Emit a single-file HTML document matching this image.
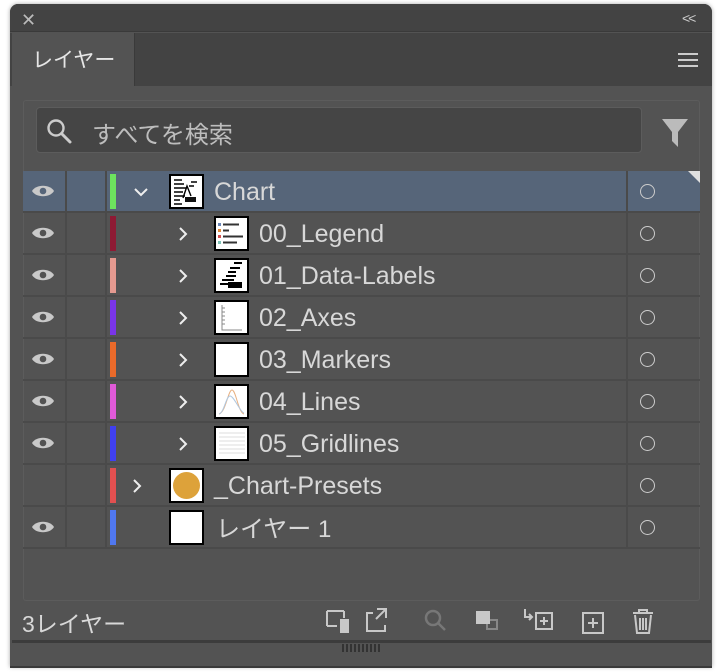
<!DOCTYPE html>
<html><head><meta charset="utf-8"><style>
*{margin:0;padding:0;box-sizing:border-box}
body{width:722px;height:672px;background:#fff;position:relative;overflow:hidden;font-family:"Liberation Sans","Noto Sans CJK JP",sans-serif;color:#d6d6d6}
.a{position:absolute}
.panel{left:10px;top:4px;width:702px;height:663px;background:#535353;border-radius:8px 8px 0 0;overflow:hidden;box-shadow:0 0 4px rgba(0,0,0,.35)}
.row{position:absolute;left:23px;width:677px;height:42px;border-bottom:2px solid #4a4a4a}
.sel{background:#566579}
.vs{position:absolute;top:0;width:2px;height:40px;background:#4a4a4a}
.bar{position:absolute;left:87px;top:3px;width:6px;height:35px}
.th{position:absolute;width:35px;height:35px;border:2px solid #000;background:#fff;top:3px;overflow:hidden}
.th svg path{fill:none}
.tx{position:absolute;top:7px;font-size:25px;color:#d8d8d8;white-space:nowrap}
.chev{position:absolute;top:13px}
.circ{position:absolute;left:617px;top:13px;width:15px;height:15px;border:1.5px solid #ccc;border-radius:50%}
.eye{position:absolute;left:8px;top:12px}
</style></head><body>
<div class="a panel">
 <div class="a" style="left:0;top:0;width:702px;height:28px;background:#434343;border-bottom:1px solid #3a3a3a"></div>
 <div class="a" style="left:11px;top:7px;font-size:18px;color:#bbb;line-height:18px">✕</div>
 <div class="a" style="left:672px;top:6px;font-size:14px;color:#ccc;letter-spacing:-2px">&lt;&lt;</div>
 <div class="a" style="left:0;top:29px;width:702px;height:53px;background:#434343"></div>
 <div class="a" style="left:2px;top:29px;width:122px;height:53px;background:#535353"></div>
 <div class="a" style="left:124px;top:29px;width:1px;height:53px;background:#3a3a3a"></div>
 <div class="a" style="left:22px;top:40px;font-size:21px;color:#e6e6e6">レイヤー</div>
 <div class="a" style="left:668px;top:49px;width:20px;height:2px;background:#ccc;box-shadow:0 6px 0 #ccc,0 12px 0 #ccc"></div>
 <div class="a" style="left:13px;top:96px;width:677px;height:501px;border:1px solid #5c5c5c;border-radius:3px"></div>
 <div class="a" style="left:26px;top:103px;width:606px;height:46px;background:#454545;border:1px solid #5c5c5c;border-radius:4px"></div>
 <svg class="a" style="left:36px;top:114px" width="28" height="28" viewBox="0 0 28 28"><circle cx="10" cy="10" r="7.5" fill="none" stroke="#ccc" stroke-width="2.4"/><path d="M15.5 15.5L24 24" stroke="#ccc" stroke-width="3" stroke-linecap="round"/></svg>
 <div class="a" style="left:82px;top:111px;font-size:24px;color:#bdbdbd">すべてを検索</div>
 <svg class="a" style="left:651px;top:113px" width="28" height="32" viewBox="0 0 28 32"><path d="M1 2H27L17 15V30L11 24V15Z" fill="#bbb"/></svg>
</div>
<div class="row sel" style="top:171px">
 <div class="vs" style="left:42px"></div><div class="vs" style="left:82px"></div><div class="vs" style="left:603px"></div>
 <svg class="eye" width="24" height="16" viewBox="0 0 24 16"><path d="M1 8C5 1 19 1 23 8C19 15 5 15 1 8Z" fill="#c9c9c9"/><circle cx="12" cy="8" r="3.3" fill="#566579"/></svg>
 <div class="bar" style="background:#6de35e"></div>
 <svg class="chev" style="left:110px;top:15px" width="16" height="12"><path d="M2 3L8 9L14 3" fill="none" stroke="#eee" stroke-width="2"/></svg>
 <div class="th" style="left:146px"><svg width="31" height="31"><path d="M3 4h8M3 8h10M3 12h12M3 16h9M3 20h11M3 24h6M3 28h8M12 22l4-12l4 10M20 6h6M18 10h5" stroke="#000" stroke-width="1.4"/><rect x="14" y="21" width="11" height="5" fill="#111"/></svg></div>
 <div class="tx" style="left:191px">Chart</div>
 <div class="circ"></div>
 <div class="a" style="right:0;top:0;width:0;height:0;border-top:12px solid #e0e0e0;border-left:12px solid transparent"></div>
</div>

<div class="row" style="top:213px">
 <div class="vs" style="left:42px"></div><div class="vs" style="left:82px"></div><div class="vs" style="left:603px"></div>
 <svg class="eye" width="24" height="16" viewBox="0 0 24 16"><path d="M1 8C5 1 19 1 23 8C19 15 5 15 1 8Z" fill="#c9c9c9"/><circle cx="12" cy="8" r="3.3" fill="#535353"/></svg>
 <div class="bar" style="background:#8e1a34"></div>
 <svg class="chev" style="left:154px" width="12" height="16"><path d="M3 2L9 8L3 14" fill="none" stroke="#eee" stroke-width="2"/></svg>
 <div class="th" style="left:191px"><svg width="31" height="31"><rect x="2" y="5" width="3" height="3" fill="#6a86b8"/><rect x="2" y="11" width="3" height="3" fill="#e0883a"/><rect x="2" y="17" width="3" height="3" fill="#d45050"/><rect x="2" y="23" width="3" height="3" fill="#7fc4b8"/><path d="M7 6.5h16M7 12.5h6M7 18.5h20M7 24.5h14" stroke="#333" stroke-width="2"/></svg></div>
 <div class="tx" style="left:236px">00_Legend</div>
 <div class="circ"></div>
</div>

<div class="row" style="top:255px">
 <div class="vs" style="left:42px"></div><div class="vs" style="left:82px"></div><div class="vs" style="left:603px"></div>
 <svg class="eye" width="24" height="16" viewBox="0 0 24 16"><path d="M1 8C5 1 19 1 23 8C19 15 5 15 1 8Z" fill="#c9c9c9"/><circle cx="12" cy="8" r="3.3" fill="#535353"/></svg>
 <div class="bar" style="background:#e59a90"></div>
 <svg class="chev" style="left:154px" width="12" height="16"><path d="M3 2L9 8L3 14" fill="none" stroke="#eee" stroke-width="2"/></svg>
 <div class="th" style="left:191px"><svg width="31" height="31"><path d="M18 3h8M14 8h10M12 12h8M10 16h10M6 20h12M4 24h8" stroke="#000" stroke-width="2"/><rect x="12" y="22" width="14" height="6" fill="#000"/></svg></div>
 <div class="tx" style="left:236px">01_Data-Labels</div>
 <div class="circ"></div>
</div>

<div class="row" style="top:297px">
 <div class="vs" style="left:42px"></div><div class="vs" style="left:82px"></div><div class="vs" style="left:603px"></div>
 <svg class="eye" width="24" height="16" viewBox="0 0 24 16"><path d="M1 8C5 1 19 1 23 8C19 15 5 15 1 8Z" fill="#c9c9c9"/><circle cx="12" cy="8" r="3.3" fill="#535353"/></svg>
 <div class="bar" style="background:#7a35e8"></div>
 <svg class="chev" style="left:154px" width="12" height="16"><path d="M3 2L9 8L3 14" fill="none" stroke="#eee" stroke-width="2"/></svg>
 <div class="th" style="left:191px"><svg width="31" height="31"><path d="M6 3v25h20M6 6h3M6 10h3M6 14h3M6 18h3M6 22h3" stroke="#888" stroke-width="1"/></svg></div>
 <div class="tx" style="left:236px">02_Axes</div>
 <div class="circ"></div>
</div>

<div class="row" style="top:339px">
 <div class="vs" style="left:42px"></div><div class="vs" style="left:82px"></div><div class="vs" style="left:603px"></div>
 <svg class="eye" width="24" height="16" viewBox="0 0 24 16"><path d="M1 8C5 1 19 1 23 8C19 15 5 15 1 8Z" fill="#c9c9c9"/><circle cx="12" cy="8" r="3.3" fill="#535353"/></svg>
 <div class="bar" style="background:#ea6a2a"></div>
 <svg class="chev" style="left:154px" width="12" height="16"><path d="M3 2L9 8L3 14" fill="none" stroke="#eee" stroke-width="2"/></svg>
 <div class="th" style="left:191px"></div>
 <div class="tx" style="left:236px">03_Markers</div>
 <div class="circ"></div>
</div>

<div class="row" style="top:381px">
 <div class="vs" style="left:42px"></div><div class="vs" style="left:82px"></div><div class="vs" style="left:603px"></div>
 <svg class="eye" width="24" height="16" viewBox="0 0 24 16"><path d="M1 8C5 1 19 1 23 8C19 15 5 15 1 8Z" fill="#c9c9c9"/><circle cx="12" cy="8" r="3.3" fill="#535353"/></svg>
 <div class="bar" style="background:#e05ad8"></div>
 <svg class="chev" style="left:154px" width="12" height="16"><path d="M3 2L9 8L3 14" fill="none" stroke="#eee" stroke-width="2"/></svg>
 <div class="th" style="left:191px"><svg width="31" height="31"><path d="M3 28C10 26 12 4 16 4S22 26 28 28" stroke="#e8b080" stroke-width="1"/><path d="M3 28C8 27 10 10 14 10S24 26 28 27" stroke="#b0c8e0" stroke-width="1"/></svg></div>
 <div class="tx" style="left:236px">04_Lines</div>
 <div class="circ"></div>
</div>

<div class="row" style="top:423px">
 <div class="vs" style="left:42px"></div><div class="vs" style="left:82px"></div><div class="vs" style="left:603px"></div>
 <svg class="eye" width="24" height="16" viewBox="0 0 24 16"><path d="M1 8C5 1 19 1 23 8C19 15 5 15 1 8Z" fill="#c9c9c9"/><circle cx="12" cy="8" r="3.3" fill="#535353"/></svg>
 <div class="bar" style="background:#4040f0"></div>
 <svg class="chev" style="left:154px" width="12" height="16"><path d="M3 2L9 8L3 14" fill="none" stroke="#eee" stroke-width="2"/></svg>
 <div class="th" style="left:191px"><svg width="31" height="31"><path d="M3 5h26M3 9h26M3 13h26M3 17h26M3 21h26M3 25h26" stroke="#ddd" stroke-width="1"/></svg></div>
 <div class="tx" style="left:236px">05_Gridlines</div>
 <div class="circ"></div>
</div>

<div class="row" style="top:465px">
 <div class="vs" style="left:42px"></div><div class="vs" style="left:82px"></div><div class="vs" style="left:603px"></div>
 <div class="bar" style="background:#e25050"></div>
 <svg class="chev" style="left:108px" width="12" height="16"><path d="M3 2L9 8L3 14" fill="none" stroke="#eee" stroke-width="2"/></svg>
 <div class="th" style="left:146px"><div style="margin:2px;width:27px;height:27px;border-radius:50%;background:#dda23a"></div></div>
 <div class="tx" style="left:191px">_Chart-Presets</div>
 <div class="circ"></div>
</div>

<div class="row" style="top:507px">
 <div class="vs" style="left:42px"></div><div class="vs" style="left:82px"></div><div class="vs" style="left:603px"></div>
 <svg class="eye" width="24" height="16" viewBox="0 0 24 16"><path d="M1 8C5 1 19 1 23 8C19 15 5 15 1 8Z" fill="#c9c9c9"/><circle cx="12" cy="8" r="3.3" fill="#535353"/></svg>
 <div class="bar" style="background:#5078f0"></div>
 <div class="th" style="left:146px"></div>
 <div class="tx" style="left:193px;top:2px;font-size:24px">レイヤー 1</div>
 <div class="circ"></div>
</div>

<div class="a" style="left:22px;top:605px;font-size:23px;color:#d8d8d8">3レイヤー</div>
<svg class="a" style="left:322px;top:606px" width="340" height="30" viewBox="0 0 340 30">
 <g fill="none" stroke="#c8c8c8" stroke-width="2">
  <path d="M5 5V20M5 5H22M5 20H15M22 5V12"/>
  <rect x="18" y="13" width="9" height="14" fill="#c8c8c8" stroke="none"/>
  <path d="M51 7H45V25H63V19M55 3H64V12M64 3L54 13"/>
  <g stroke="#777" stroke-width="2.5"><circle cx="111" cy="12" r="7"/><path d="M116 17L123 24"/></g>
  <path d="M165 23V14H175V23Z" stroke="#888"/>
  <rect x="155" y="6" width="12" height="11" fill="#c8c8c8" stroke="#c8c8c8"/>
  <path d="M203 3V11H210M207 8L210 11L207 14"/>
  <rect x="214" y="7" width="16" height="16"/><path d="M222 11V19M218 15H226"/>
  <rect x="261" y="7" width="20" height="20"/><path d="M271 12V22M266 17H276"/>
  <path d="M311 7H331M317 7V4H325V7M313 9L315 27H327L329 9M318 12V24M321 12V24M324 12V24"/>
 </g>
</svg>
<div class="a" style="left:12px;top:640px;width:699px;height:3px;background:#3c3c3c"></div>
<div class="a" style="left:342px;top:644px;width:38px;height:8px;background:repeating-linear-gradient(90deg,#333 0 2px,transparent 2px 4px)"></div>
<div class="a" style="left:10px;top:666px;width:702px;height:2px;background:#3a3a3a"></div>
</body></html>
